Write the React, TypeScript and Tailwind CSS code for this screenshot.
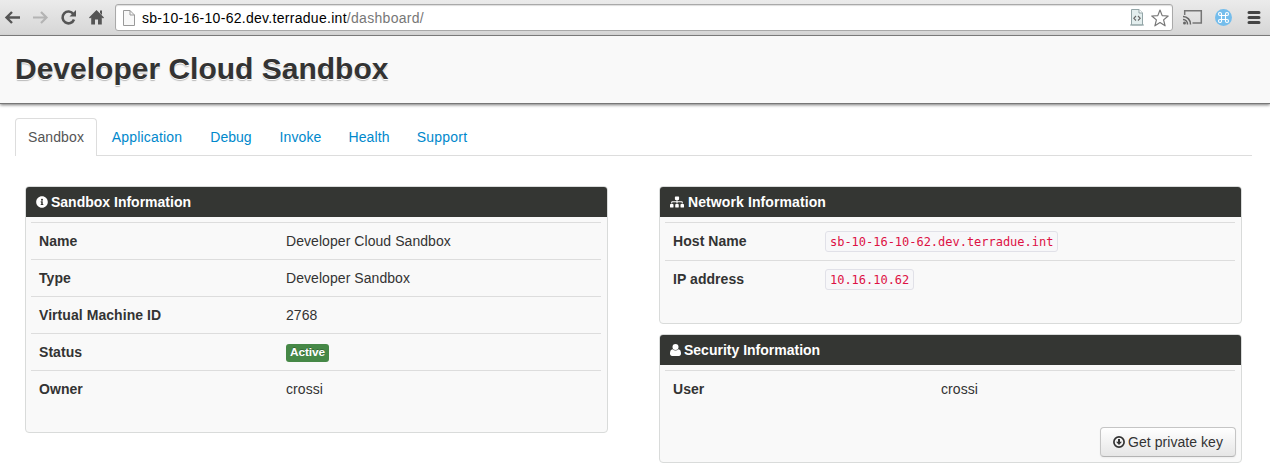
import type { ReactNode } from 'react';
import { FaInfoCircle, FaSitemap } from 'react-icons/fa';

function UserIcon() {
  return (
    <svg viewBox="0 0 11 12" className="h-3 w-[11px]" fill="currentColor">
      <circle cx="5.5" cy="3.1" r="3" />
      <path d="M2.7 5.2A3.9 3.9 0 0 0 8.3 5.2C10.3 5.3 11 7.3 11 9.6C11 11.2 10.2 12 8.9 12H2.1C.8 12 0 11.2 0 9.6C0 7.3.7 5.3 2.7 5.2Z" />
    </svg>
  );
}

function DownloadIcon() {
  return (
    <svg viewBox="0 0 12 12" className="h-3 w-3" fill="none">
      <circle cx="6" cy="6" r="5.1" stroke="currentColor" strokeWidth="1.7" />
      <path d="M5 3H7V5.8H9L6 9L3 5.8H5Z" fill="currentColor" />
    </svg>
  );
}

function BrowserBar() {
  return (
    <div className="flex h-9 items-start border-b border-[#7b7b7b] bg-linear-to-b from-[#ebebeb] to-[#d6d6d6] pt-1">
      <svg viewBox="0 0 112 27" className="h-[27px] w-28 shrink-0" fill="none">
        <path d="M20 13.5H7M12 8L6.5 13.5L12 19" stroke="#555" strokeWidth="2.4" />
        <path d="M33 13.5H46M41 8L46.500 13.5L41 19" stroke="#b4b4b4" strokeWidth="2.2" />
        <path d="M73.300 10A5.900 5.900 0 1 0 74 15.500" stroke="#555" strokeWidth="2.600" />
        <path d="M76 6V12.500H69.500Z" fill="#555" />
        <path d="M96.500 6L104 13.500L103 14.500L101.800 13.500V20.500H98V15.500H95V20.500H91.200V13.500L90 14.500L89 13.500Z" fill="#555" />
        <path d="M100 6.500H102V11L100 9Z" fill="#555" />
      </svg>
      <div className="ml-[3px] flex h-[27px] w-[1058px] items-center rounded-[3px] border border-[#a9a9a9] bg-white shadow-[inset_0_1px_1px_#ddd]">
        <svg viewBox="0 0 12 16" className="ml-[7px] h-4 w-3" fill="none">
          <path d="M.5.5H7L11.500 5V15.500H.5Z" fill="#f8f8f8" stroke="#999" />
          <path d="M7 .5V5H11.500" stroke="#999" />
        </svg>
        <div className="ml-[7px] grow pt-px text-[14px] leading-[25px] tracking-[0.29px] whitespace-nowrap text-black">
          sb-10-16-10-62.dev.terradue.int<span className="text-[#777]">/dashboard/</span>
        </div>
        <svg viewBox="0 0 14 17" className="mr-[7px] h-[17px] w-3.5" fill="none">
          <path d="M1.500 .5H9L12.500 4V16H1.500Z" fill="#e3eeee" stroke="#93a5a7" />
          <path d="M9 .5V4H12.500" fill="#fff" stroke="#93a5a7" />
          <path d="M0 16H14" stroke="#93a5a7" />
          <path d="M6 7L3.800 9.300L6 11.500M8 7L10.200 9.300L8 11.500" stroke="#666" strokeWidth="1.100" />
        </svg>
        <svg viewBox="0 0 18 18" className="mr-[3px] h-[18px] w-[18px]" fill="#fff">
          <path d="M9 1L11.200 6.600L17.200 7L12.600 10.900L14.100 16.800L9 13.500L3.900 16.800L5.400 10.900L.8 7L6.800 6.600Z" stroke="#777" strokeWidth="1.200" strokeLinejoin="round" />
        </svg>
      </div>
      <svg viewBox="0 0 97 27" className="h-[27px] w-[97px] shrink-0" fill="none">
        <path d="M11.700 11V6.700H28.300V19H19.500" stroke="#757575" strokeWidth="1.500" />
        <path d="M10 12.500A7.500 7.500 0 0 1 17.500 20.500M10 15.500A4.500 4.500 0 0 1 14.500 20.500" stroke="#666" strokeWidth="1.500" />
        <circle cx="11.500" cy="19" r="1.500" fill="#666" />
        <circle cx="50.500" cy="13.500" r="8.500" fill="#74bdec" />
        <path d="M48.500 11.500H52.500V15.500H48.500ZM48.500 11.500H47A1.500 1.500 0 1 1 48.500 10ZM52.500 11.500V10A1.500 1.500 0 1 1 54 11.500ZM52.500 15.500H54A1.500 1.500 0 1 1 52.500 17ZM48.500 15.500V17A1.500 1.500 0 1 1 47 15.500Z" stroke="#fff" strokeWidth="1.100" />
        <path d="M76 8.500H86M76 13.500H86M76 18.500H86" stroke="#444" strokeWidth="3" strokeLinecap="round" />
      </svg>
    </div>
  );
}

function Panel({ icon, title, className, children }: { icon: ReactNode; title: ReactNode; className: string; children: ReactNode }) {
  return (
    <section className={`flex flex-col overflow-hidden rounded-[4px] border border-[#d9dbda] bg-[#f9f9f9] ${className}`}>
      <h3 className="flex h-[30px] shrink-0 items-center bg-[#343633] pl-2.5 text-[14px] font-bold text-white">
        {icon}
        {title}
      </h3>
      <div className="flex grow flex-col px-[5px] pt-[5px]">{children}</div>
    </section>
  );
}

function Row({ label, labelClass, height, children }: { label: ReactNode; labelClass: string; height: string; children: ReactNode }) {
  return (
    <div className={`mr-px flex shrink-0 items-start border-t border-[#ddd] pt-2 pl-2 tracking-[0.06px] ${height}`}>
      <div className={`font-bold ${labelClass}`}>{label}</div>
      <div>{children}</div>
    </div>
  );
}

function Code({ children }: { children: ReactNode }) {
  return (
    <code className="block h-[21px] rounded-[3px] border border-[#e1e1e8] bg-[#f7f7f9] px-1 font-['DejaVu_Sans_Mono',monospace] text-[12px] leading-5 tracking-[-0.02px] text-[#d14]">
      {children}
    </code>
  );
}

const links = [
  { name: 'Application', style: 'w-[98px] tracking-[0.2px]' },
  { name: 'Debug', style: 'w-[70px]' },
  { name: 'Invoke', style: 'w-[69px] tracking-[0.1px]' },
  { name: 'Health', style: 'w-[68px] tracking-[0.1px]' },
  { name: 'Support', style: 'w-[78px] tracking-[0.2px]' },
];

export default function App() {
  return (
    <div className="h-[473px] w-[1270px] overflow-hidden bg-white font-['Liberation_Sans',Arial,sans-serif] text-[14px] leading-5 text-[#333]">
      <BrowserBar />
      <header className="h-[68px] border-b border-[#777] bg-[#f9f9f9] pl-[15px] shadow-[0_1px_3px_#777]">
        <h1 className="pt-[13px] text-[30px] leading-10 font-bold text-[#333] [text-shadow:0_1px_0_#fff,0_2px_1px_#bbb]">Developer Cloud Sandbox</h1>
      </header>
      <nav className="mt-3.5 mr-[18px] ml-[15px] flex h-[38px] border-b border-[#ddd] leading-9 text-[#08c]">
        <a className="mr-px h-[38px] w-[82px] rounded-t-[4px] border border-b-0 border-[#ddd] bg-white text-center tracking-[0.1px] text-[#555]">Sandbox</a>
        {links.map((link) => (
          <a key={link.name} className={`pt-px text-center ${link.style}`}>{link.name}</a>
        ))}
      </nav>
      <main className="mt-[30px] flex items-start gap-[51px] pl-[25px]">
        <Panel icon={<FaInfoCircle size={12} className="mr-[3px]" />} title="Sandbox Information" className="h-[247px] w-[583px]">
          <Row label="Name" labelClass="w-[247px]" height="h-[37px]">Developer Cloud Sandbox</Row>
          <Row label="Type" labelClass="w-[247px]" height="h-[37px]">Developer Sandbox</Row>
          <Row label="Virtual Machine ID" labelClass="w-[247px]" height="h-[37px]">2768</Row>
          <Row label="Status" labelClass="w-[247px]" height="h-[37px]">
            <span className="mt-0.5 block h-[18px] w-[43px] rounded-[3px] bg-[#468847] text-center text-[11.84px] leading-[17px] font-bold tracking-[-0.05px] text-white [text-shadow:0_-1px_0_#00000040]">Active</span>
          </Row>
          <Row label="Owner" labelClass="w-[247px]" height="h-[37px]">crossi</Row>
        </Panel>
        <div className="flex flex-col gap-2.5">
          <Panel icon={<FaSitemap size={14} className="mr-[4px]" />} title={<span className="tracking-[0.1px]">Network Information</span>} className="h-[138px] w-[583px]">
            <Row label="Host Name" labelClass="w-[152px]" height="h-[38px]"><Code>sb-10-16-10-62.dev.terradue.int</Code></Row>
            <Row label="IP address" labelClass="w-[152px]" height="h-[38px]"><Code>10.16.10.62</Code></Row>
          </Panel>
          <Panel icon={<UserIcon />} title={<span className="ml-[3px]">Security Information</span>} className="h-[129px] w-[583px]">
            <Row label="User" labelClass="w-[268px]" height="h-[37px]">crossi</Row>
            <button className="mt-5 flex h-[30px] w-[136px] items-center justify-center gap-[3px] self-end rounded-[4px] border border-[#c5c5c5] border-b-[#b3b3b3] bg-linear-to-b from-white to-[#e6e6e6] tracking-[0.06px] shadow-[0_1px_2px_#0000000d]">
              <DownloadIcon />
              Get private key
            </button>
          </Panel>
        </div>
      </main>
    </div>
  );
}
